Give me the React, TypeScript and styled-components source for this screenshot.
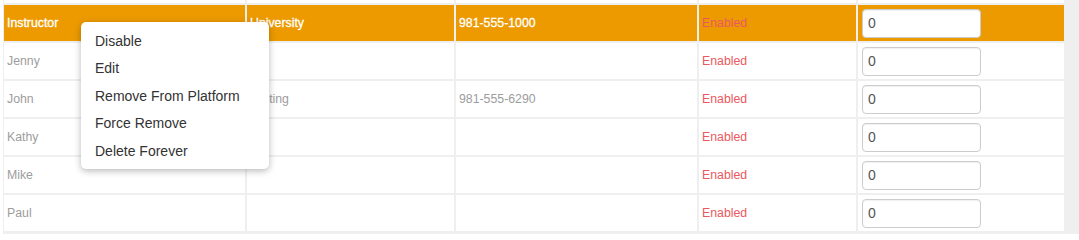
import React from "react";
import styled, { createGlobalStyle } from "styled-components";

const GlobalStyle = createGlobalStyle`
  html, body {
    margin: 0;
    padding: 0;
    background: #fff;
  }
  body {
    font-family: "Liberation Sans", Arial, sans-serif;
  }
`;

const Page = styled.div`
  position: relative;
  display: flex;
  height: 234px;
  overflow: hidden;
`;

const Table = styled.div`
  margin-left: 3px;
  width: 1061px;
  box-sizing: border-box;
  display: grid;
  grid-template-columns: 241px 207px 241px 157px 206px;
  grid-auto-rows: 36px;
  grid-template-rows: 3px;
  gap: 2px;
  padding: 0 0 2px 1px;
  background: #efefef;
  align-content: start;
`;

const Gutter = styled.div`
  flex: 1;
  background: #efefef;
`;

const Cell = styled.div<{ $active?: boolean }>`
  display: flex;
  align-items: center;
  padding: 0 3px;
  min-width: 0;
  overflow: hidden;
  white-space: nowrap;
  font-size: 12.3px;
  background: ${(p) => (p.$active ? "#ec9a00" : "#fff")};
  color: ${(p) => (p.$active ? "#fff" : "#9d9d9d")};
  ${(p) => p.$active && "-webkit-text-stroke: 0.3px #fff;"}
`;

const SliverCell = styled.div`
  background: #fff;
`;

const Status = styled.span`
  color: #eb5860;
  -webkit-text-stroke: 0;
`;

const InputCell = styled(Cell)`
  padding: 0 4px;
`;

const CountInput = styled.input`
  box-sizing: border-box;
  width: 119px;
  height: 29px;
  border: 1px solid #cccccc;
  border-radius: 4px;
  background: #fff;
  padding: 0 5px;
  font-family: "Liberation Sans", Arial, sans-serif;
  font-size: 14px;
  color: #555;
  -webkit-text-stroke: 0;
  outline: none;
  box-shadow: inset 0 1px 1px rgba(0, 0, 0, 0.06);
`;

const Menu = styled.ul`
  position: absolute;
  left: 81px;
  top: 22px;
  width: 188px;
  box-sizing: border-box;
  margin: 0;
  padding: 6px 0 4px;
  list-style: none;
  background: #fff;
  border-radius: 5px;
  box-shadow: 0 2px 7px rgba(0, 0, 0, 0.28);
`;

const MenuItem = styled.li`
  padding-left: 14px;
  line-height: 27.4px;
  font-size: 14px;
  color: #333;
  cursor: pointer;
`;

type Row = {
  name: string;
  org?: string;
  phone?: string;
  active?: boolean;
};

const rows: Row[] = [
  { name: "Instructor", org: "University", phone: "981-555-1000", active: true },
  { name: "Jenny" },
  { name: "John", org: "Testing", phone: "981-555-6290" },
  { name: "Kathy" },
  { name: "Mike" },
  { name: "Paul" },
];

const menuItems = [
  "Disable",
  "Edit",
  "Remove From Platform",
  "Force Remove",
  "Delete Forever",
];

export default function App() {
  return (
    <>
      <GlobalStyle />
      <Page>
        <Table>
          {[0, 1, 2, 3, 4].map((i) => (
            <SliverCell key={`s${i}`} />
          ))}
          {rows.map((r) => (
            <React.Fragment key={r.name}>
              <Cell $active={r.active}>{r.name}</Cell>
              <Cell $active={r.active}>{r.org}</Cell>
              <Cell $active={r.active}>{r.phone}</Cell>
              <Cell $active={r.active}>
                <Status>Enabled</Status>
              </Cell>
              <InputCell $active={r.active}>
                <CountInput defaultValue="0" />
              </InputCell>
            </React.Fragment>
          ))}
        </Table>
        <Gutter />
        <Menu>
          {menuItems.map((m) => (
            <MenuItem key={m}>{m}</MenuItem>
          ))}
        </Menu>
      </Page>
    </>
  );
}
